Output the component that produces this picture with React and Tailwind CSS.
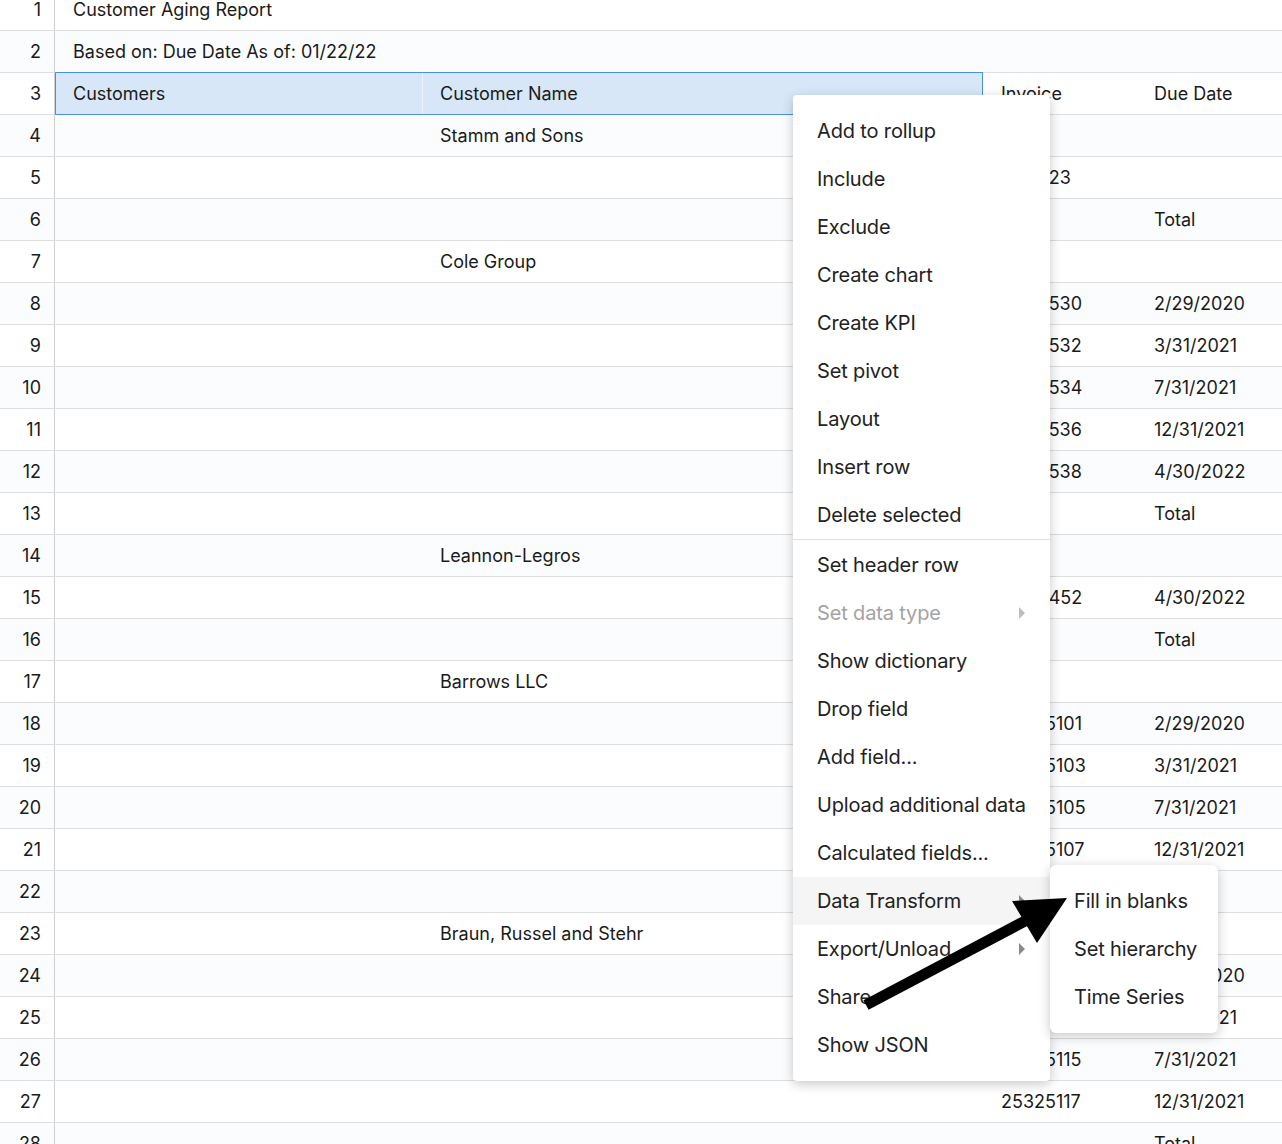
import React from "react";

const rows = [
  { n: 1, full: "Customer Aging Report" },
  { n: 2, full: "Based on: Due Date As of: 01/22/22" },
  { n: 3, header: true, c1: "Customers", c2: "Customer Name", c3: "Invoice", c4: "Due Date" },
  { n: 4, c2: "Stamm and Sons" },
  { n: 5, c3: "2531123" },
  { n: 6, c4: "Total" },
  { n: 7, c2: "Cole Group" },
  { n: 8, c3: "25311530", c4: "2/29/2020" },
  { n: 9, c3: "25311532", c4: "3/31/2021" },
  { n: 10, c3: "25311534", c4: "7/31/2021" },
  { n: 11, c3: "25311536", c4: "12/31/2021" },
  { n: 12, c3: "25311538", c4: "4/30/2022" },
  { n: 13, c4: "Total" },
  { n: 14, c2: "Leannon-Legros" },
  { n: 15, c3: "25311452", c4: "4/30/2022" },
  { n: 16, c4: "Total" },
  { n: 17, c2: "Barrows LLC" },
  { n: 18, c3: "25325101", c4: "2/29/2020" },
  { n: 19, c3: "25325103", c4: "3/31/2021" },
  { n: 20, c3: "25325105", c4: "7/31/2021" },
  { n: 21, c3: "25325107", c4: "12/31/2021" },
  { n: 22, c4: "Total" },
  { n: 23, c2: "Braun, Russel and Stehr" },
  { n: 24, c3: "25325111", c4: "2/29/2020" },
  { n: 25, c3: "25325113", c4: "3/31/2021" },
  { n: 26, c3: "25325115", c4: "7/31/2021" },
  { n: 27, c3: "25325117", c4: "12/31/2021" },
  { n: 28, c4: "Total" },
];

const menuTop = [
  "Add to rollup",
  "Include",
  "Exclude",
  "Create chart",
  "Create KPI",
  "Set pivot",
  "Layout",
  "Insert row",
  "Delete selected",
];

const menuBottom = [
  { t: "Set header row" },
  { t: "Set data type", disabled: true, sub: true },
  { t: "Show dictionary" },
  { t: "Drop field" },
  { t: "Add field..." },
  { t: "Upload additional data" },
  { t: "Calculated fields..." },
  { t: "Data Transform", sub: true, active: true },
  { t: "Export/Unload", sub: true },
  { t: "Share" },
  { t: "Show JSON" },
];

function Caret({ disabled }) {
  return (
    <svg width="8" height="14" viewBox="0 0 8 14" className="absolute right-[24px] top-1/2 -translate-y-1/2">
      <polygon points="1,1 7,7 1,13" fill={disabled ? "#bdbdbd" : "#8a8a8a"} />
    </svg>
  );
}

function MenuItem({ t, disabled, sub, active }) {
  return (
    <div
      className={
        "relative h-12 flex items-center pl-6 whitespace-nowrap " +
        (active ? "bg-[#f5f5f5] " : "") +
        (disabled ? "text-[#a3a3a3]" : "text-[#222222]")
      }
    >
      {t}
      {sub && <Caret disabled={disabled} />}
    </div>
  );
}

function Row({ r }) {
  const even = r.n % 2 === 0;
  const bg = even ? "bg-[#fbfcfe]" : "bg-white";
  return (
    <div className={"flex h-[42px] border-b border-[#dedede] " + bg}>
      <div className="w-[55px] shrink-0 border-r border-[#cfcfcf] flex items-center justify-end pr-[13px]">
        {r.n}
      </div>
      {r.full !== undefined ? (
        <div className="flex-1 flex items-center pl-[18px] whitespace-nowrap">{r.full}</div>
      ) : r.header ? (
        <>
          <div className="flex w-[928px] shrink-0 bg-[#d8e7f7] border border-[#4a90e2] -my-px">
            <div className="w-[367px] shrink-0 flex items-center pl-[17px] border-r border-[#eef4fb]">{r.c1}</div>
            <div className="flex-1 flex items-center pl-[17px]">{r.c2}</div>
          </div>
          <div className="w-[153px] shrink-0 flex items-center pl-[18px]">{r.c3}</div>
          <div className="flex-1 flex items-center pl-[18px]">{r.c4}</div>
        </>
      ) : (
        <>
          <div className="w-[367px] shrink-0 flex items-center pl-[18px]">{r.c1}</div>
          <div className="w-[561px] shrink-0 flex items-center pl-[18px]">{r.c2}</div>
          <div className="w-[153px] shrink-0 flex items-center pl-[18px]">{r.c3}</div>
          <div className="flex-1 flex items-center pl-[18px]">{r.c4}</div>
        </>
      )}
    </div>
  );
}

export default function App() {
  return (
    <div
      className="relative w-[1282px] h-[1144px] overflow-hidden bg-white text-[18px] text-[#1a1a1a]"
      style={{ fontFamily: "Inter, 'Noto Sans', sans-serif" }}
    >
      <div className="-mt-[11px]">
        {rows.map((r) => (
          <Row key={r.n} r={r} />
        ))}
      </div>

      {/* Context menu */}
      <div className="absolute left-[793px] top-[95px] w-[257px] bg-white rounded-[4px] py-3 text-[20px] tracking-[-0.15px] shadow-[0_3px_12px_rgba(0,0,0,0.22)]">
        {menuTop.map((t) => (
          <MenuItem key={t} t={t} />
        ))}
        <div className="h-px bg-[#e0e0e0] mb-px" />
        {menuBottom.map((m) => (
          <MenuItem key={m.t} {...m} />
        ))}
      </div>

      {/* Submenu */}
      <div className="absolute left-[1050px] top-[865px] w-[168px] bg-white rounded-[6px] py-3 text-[20px] tracking-[-0.15px] shadow-[0_3px_12px_rgba(0,0,0,0.22)]">
        {["Fill in blanks", "Set hierarchy", "Time Series"].map((t) => (
          <div key={t} className="h-12 flex items-center pl-6 whitespace-nowrap text-[#222222]">
            {t}
          </div>
        ))}
      </div>

      {/* Annotation arrow */}
      <svg className="absolute inset-0 pointer-events-none" width="1282" height="1144" viewBox="0 0 1282 1144">
        <line x1="866" y1="1005" x2="1027" y2="920" stroke="#000" strokeWidth="11" />
        <polygon points="1067,898 1012,901 1037,943" fill="#000" />
      </svg>
    </div>
  );
}
